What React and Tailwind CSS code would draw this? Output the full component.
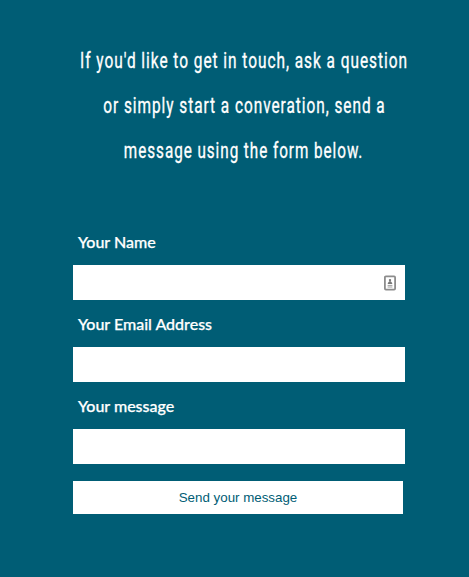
function ContactCardIcon() {
  return (
    <svg className="h-4 w-3" viewBox="0 0 12 16" fill="none">
      <rect x="0.9" y="1.4" width="10.2" height="13.2" rx="1" stroke="#8c8c8c" strokeWidth="1.8" />
      <circle cx="6" cy="5.1" r="1.2" fill="#777777" />
      <path d="M3.8 8.9V7.9L5.2 6.3H6.8L8.2 7.9V8.9Z" fill="#777777" />
      <path d="M3.6 10.4H8.4M3.6 12H8.4" stroke="#a0a0a0" strokeWidth="1" />
    </svg>
  );
}

function Field({ label, icon }) {
  return (
    <label className="block h-[82px]">
      <span className="block h-[47px] pl-[5px] pt-[12px] text-[16px] leading-[24px] font-medium text-white [-webkit-text-stroke:0.25px_white]">{label}</span>
      <span className="flex h-[35px] w-[332px] items-center bg-white pr-[9px]">
        <input type="text" className="h-full min-w-0 flex-1 px-2 text-[#005d75] outline-none" />
        {icon}
      </span>
    </label>
  );
}

export default function App() {
  return (
    <main className="h-[577px] w-[469px] overflow-hidden bg-[#005d75] pt-[38px] font-['Lato',sans-serif]">
      <h1 className="ml-[19px] flex w-[450px] flex-col items-center font-['Roboto',sans-serif] text-[22.5px] leading-[45px] font-normal tracking-[1.4px] text-white [-webkit-text-stroke:0.35px_white]">
        <span className="block scale-x-[0.686] whitespace-nowrap">If you'd like to get in touch, ask a question</span>
        <span className="block scale-x-[0.684] whitespace-nowrap">or simply start a converation, send a</span>
        <span className="block scale-x-[0.678] whitespace-nowrap">message using the form below.</span>
      </h1>
      <form className="ml-[73px] mt-[45px]" onSubmit={(e) => e.preventDefault()}>
        <Field label="Your Name" icon={<ContactCardIcon />} />
        <Field label="Your Email Address" />
        <Field label="Your message" />
        <button className="mt-[17px] block h-[33px] w-[330px] bg-white font-['Liberation_Sans',Arial,sans-serif] text-[13.333px] text-[#005d75]">
          Send your message
        </button>
      </form>
    </main>
  );
}
